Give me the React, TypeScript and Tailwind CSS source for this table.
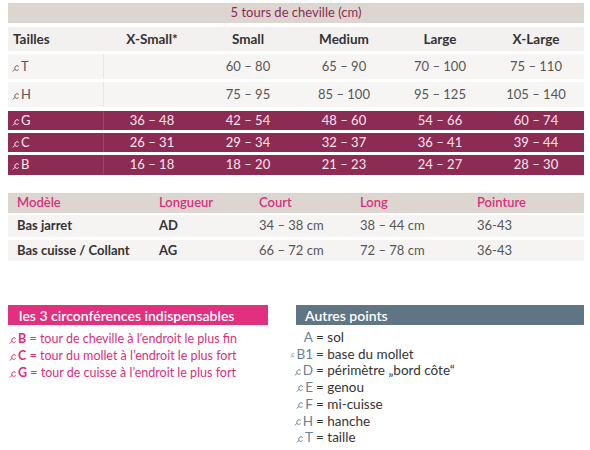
import React from "react";

const Circ = ({ color }: { color: string }) => (
  <svg width="8" height="9" viewBox="0 0 8 9" className="inline-block mr-[1px] align-baseline" style={{ marginBottom: "-1px" }}>
    <path d="M6.8 3.6 C6.1 2.4 4.1 2.4 3.2 3.8 C2.3 5.2 2.8 7.4 4.6 7.4 C5.5 7.4 6.2 7 6.6 6.5" fill="none" stroke={color} strokeWidth="1" />
    <path d="M3 6.3 L0.8 8.5" fill="none" stroke={color} strokeWidth="1" />
  </svg>
);

const sizes = ["X-Small*", "Small", "Medium", "Large", "X-Large"];

type Row = { label: string; vals: string[]; h: string; mt: string };

const lightRows: Row[] = [
  { label: "T", vals: ["", "60 – 80", "65 – 90", "70 – 100", "75 – 110"], h: "h-[25px]", mt: "mt-[3px]" },
  { label: "H", vals: ["", "75 – 95", "85 – 100", "95 – 125", "105 – 140"], h: "h-[25px]", mt: "mt-[3px]" },
];
const darkRows: Row[] = [
  { label: "G", vals: ["36 – 48", "42 – 54", "48 – 60", "54 – 66", "60 – 74"], h: "h-[19px]", mt: "mt-[4px]" },
  { label: "C", vals: ["26 – 31", "29 – 34", "32 – 37", "36 – 41", "39 – 44"], h: "h-[19px]", mt: "mt-[3px]" },
  { label: "B", vals: ["16 – 18", "18 – 20", "21 – 23", "24 – 27", "28 – 30"], h: "h-[20px]", mt: "mt-[3px]" },
];

const autres = [
  { k: "A", c: false, t: "sol" },
  { k: "B1", c: true, t: "base du mollet" },
  { k: "D", c: true, t: "périmètre „bord côte“" },
  { k: "E", c: true, t: "genou" },
  { k: "F", c: true, t: "mi-cuisse" },
  { k: "H", c: true, t: "hanche" },
  { k: "T", c: true, t: "taille" },
];

const circs = [
  { k: "B", t: "tour de cheville à l’endroit le plus fin" },
  { k: "C", t: "tour du mollet à l’endroit le plus fort" },
  { k: "G", t: "tour de cuisse à l’endroit le plus fort" },
];

export default function App() {
  return (
    <div
      className="w-[590px] h-[450px] bg-white overflow-hidden"
      style={{ fontFamily: "Lato, 'Open Sans', sans-serif" }}
    >
      {/* Table 1 */}
      <div className="ml-[8px] w-[576px] pt-[3px]">
        <div className="h-[20px] bg-[#ddd6d0] flex items-center justify-center text-[13px] text-[#8c2b53]">
          5 tours de cheville (cm)
        </div>
        <div className="mt-[4px] h-[24px] bg-[#f3f1ef] flex items-center text-[13.5px] font-bold text-[#333333]">
          <div className="w-[96px] pl-[5px]">Tailles</div>
          {sizes.map((s) => (
            <div key={s} className="w-[96px] text-center">{s}</div>
          ))}
        </div>
        {lightRows.map((r) => (
          <div key={r.label} className={`${r.mt} ${r.h} bg-[#f7f5f3] flex items-stretch text-[13px] text-[#555555]`}>
            <div className="w-[96px] pl-[4px] flex items-center border-r border-[#ebe7e3]">
              <Circ color="#666666" />
              <span>{r.label}</span>
            </div>
            {r.vals.map((v, i) => (
              <div key={i} className="w-[96px] flex items-center justify-center">{v}</div>
            ))}
          </div>
        ))}
        {darkRows.map((r) => (
          <div key={r.label} className={`${r.mt} ${r.h} bg-[#8c2b53] flex items-stretch text-[13px] text-[#f6e8ee]`}>
            <div className="w-[96px] pl-[4px] flex items-center border-r border-[#9b4468]">
              <Circ color="#f6e8ee" />
              <span>{r.label}</span>
            </div>
            {r.vals.map((v, i) => (
              <div key={i} className="w-[96px] flex items-center justify-center">{v}</div>
            ))}
          </div>
        ))}
      </div>

      {/* Table 2 */}
      <div className="ml-[8px] w-[576px] mt-[18px] text-[13px]">
        <div className="h-[20px] bg-[#ddd6d0] flex items-center text-[#d8307c] font-semibold">
          <div className="w-[142px] pl-[9px]">Modèle</div>
          <div className="w-[100px] pl-[9px]">Longueur</div>
          <div className="w-[101px] pl-[9px]">Court</div>
          <div className="w-[117px] pl-[9px]">Long</div>
          <div className="w-[116px] pl-[9px]">Pointure</div>
        </div>
        <div className="mt-[2px] h-[22px] bg-[#f6f4f2] flex items-center text-[#555555]">
          <div className="w-[142px] pl-[9px] font-bold text-[#333333]">Bas jarret</div>
          <div className="w-[100px] pl-[9px] font-bold text-[#333333]">AD</div>
          <div className="w-[101px] pl-[9px]">34 – 38 cm</div>
          <div className="w-[117px] pl-[9px]">38 – 44 cm</div>
          <div className="w-[116px] pl-[9px]">36-43</div>
        </div>
        <div className="mt-[3px] h-[21px] bg-[#f6f4f2] flex items-center text-[#555555]">
          <div className="w-[142px] pl-[9px] font-bold text-[#333333]">Bas cuisse / Collant</div>
          <div className="w-[100px] pl-[9px] font-bold text-[#333333]">AG</div>
          <div className="w-[101px] pl-[9px]">66 – 72 cm</div>
          <div className="w-[117px] pl-[9px]">72 – 78 cm</div>
          <div className="w-[116px] pl-[9px]">36-43</div>
        </div>
      </div>

      {/* Bottom */}
      <div className="flex mt-[44px]">
        <div className="ml-[8px] w-[260px]">
          <div className="h-[20px] bg-[#e0307e] flex items-center pl-[11px] text-[14px] font-semibold text-white">
            les 3 circonférences indispensables
          </div>
          <div className="mt-[5px] text-[12.5px] leading-[17px] text-[#d8307c]">
            {circs.map((c) => (
              <div key={c.k} className="pl-[1px] whitespace-nowrap">
                <Circ color="#d8307c" />
                <span className="font-bold">{c.k}</span> = {c.t}
              </div>
            ))}
          </div>
        </div>
        <div className="ml-[28px] w-[288px]">
          <div className="h-[20px] bg-[#5f7584] flex items-center pl-[9px] text-[14px] font-semibold text-white">
            Autres points
          </div>
          <div className="mt-[4px] text-[13.5px] leading-[16.7px] text-[#333333]">
            {autres.map((a) => (
              <div key={a.k} className="flex whitespace-nowrap">
                <div className="w-[23px] -ml-[6px] text-right text-[#6b8294] flex items-center justify-end">
                  {a.c && <Circ color="#6b8294" />}
                  <span>{a.k}</span>
                </div>
                <span className="ml-[3px]">= {a.t}</span>
              </div>
            ))}
          </div>
        </div>
      </div>
    </div>
  );
}
